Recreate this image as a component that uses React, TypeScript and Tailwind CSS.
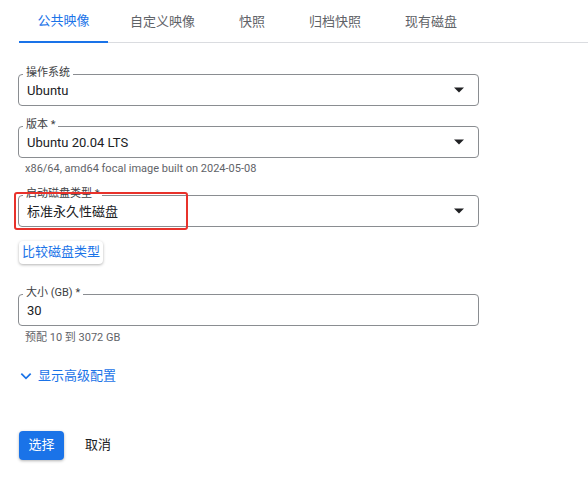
import React from "react";

function Field({ label, value, select }: { label: string; value: string; select?: boolean }) {
  return (
    <div className="relative w-[461px] h-[32px] border border-[#8a8d91] rounded-[4px] flex items-center pl-[8px] pr-[14px]">
      <span className="absolute -top-[9px] left-[4px] bg-white px-[3px] text-[11px] leading-[14px] text-[#3c4043]">{label}</span>
      <span className="flex-1 text-[13px] text-[#202124] pt-[2px]">{value}</span>
      {select && (
        <svg width="10" height="6" viewBox="0 0 10 5"><path d="M0 0h10L5 5z" fill="#202124" /></svg>
      )}
    </div>
  );
}

export default function App() {
  const tabs = ["公共映像", "自定义映像", "快照", "归档快照", "现有磁盘"];
  return (
    <div className="w-[588px] h-[483px] bg-white overflow-hidden" style={{ fontFamily: "Roboto, 'Noto Sans CJK SC', sans-serif" }}>
      <div className="ml-[19px] flex border-b border-[#dadce0] h-[43px]">
        {tabs.map((t, i) => (
          <div key={t} className={`h-[43px] flex items-center justify-center text-[13px] ${i === 0 ? "w-[89px] text-[#1a73e8] border-b-2 border-[#1a73e8]" : "text-[#5f6368] px-[22px]"}`}>
            {t}
          </div>
        ))}
      </div>
      <div className="pl-[18px] pt-[31px] flex flex-col">
        <Field label="操作系统" value="Ubuntu" select />
        <div className="mt-[20px]"><Field label="版本 *" value="Ubuntu 20.04 LTS" select /></div>
        <div className="text-[11px] text-[#5f6368] mt-[3px] ml-[7px]">x86/64, amd64 focal image built on 2024-05-08</div>
        <div className="relative mt-[17px]">
          <Field label="启动磁盘类型 *" value="标准永久性磁盘" select />
          <div className="absolute -left-[4px] -top-[3px] w-[174px] h-[38px] border-2 border-[#e8322b] rounded-[3px]" />
        </div>
        <div className="mt-[14px] w-[84px] h-[23px] rounded-[4px] bg-white shadow-[0_1px_3px_rgba(0,0,0,0.3)] flex items-center justify-center text-[13px] text-[#1a73e8] ml-[1px]">比较磁盘类型</div>
        <div className="mt-[30px]"><Field label="大小 (GB) *" value="30" /></div>
        <div className="text-[11px] text-[#5f6368] mt-[4px] ml-[7px]">预配 10 到 3072 GB</div>
        <div className="mt-[20px] flex items-center gap-[5px] text-[13px] text-[#1a73e8] ml-[1px]">
          <svg width="14" height="14" viewBox="0 0 24 24"><path d="M4 8l8 8 8-8" fill="none" stroke="#1a73e8" strokeWidth="3" /></svg>
          显示高级配置
        </div>
        <div className="mt-[45px] flex items-center gap-[10px]">
          <div className="w-[45px] h-[29px] rounded-[4px] bg-[#1a73e8] text-white text-[13px] flex items-center justify-center shadow-[0_1px_3px_rgba(0,0,0,0.3)] ml-[1px]">选择</div>
          <div className="px-[11px] text-[13px] text-[#202124]">取消</div>
        </div>
      </div>
    </div>
  );
}
